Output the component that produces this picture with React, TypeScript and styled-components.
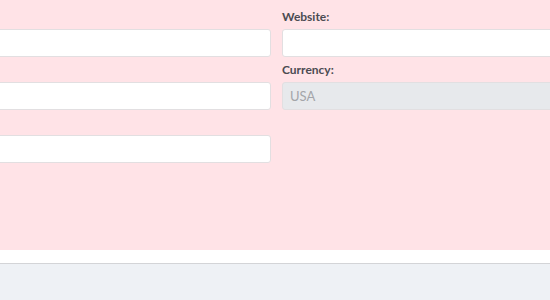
import styled, { createGlobalStyle } from 'styled-components';

const GlobalStyle = createGlobalStyle`
  html, body {
    margin: 0;
    padding: 0;
    overflow: hidden;
    background: #eef1f5;
    font-family: Lato, "Open Sans", sans-serif;
  }
`;

const Page = styled.div`
  width: 550px;
  height: 300px;
  overflow: hidden;
  display: flex;
  flex-direction: column;
`;

const FormArea = styled.section`
  height: 250px;
  box-sizing: border-box;
  background: #ffe3e7;
  padding-top: 10px;
`;

const Columns = styled.div`
  display: grid;
  grid-template-columns: 400px 400px;
  column-gap: 11px;
  margin-left: -129px;
`;

const Column = styled.div`
  display: flex;
  flex-direction: column;
`;

// fields without a visible label keep the same vertical rhythm
const Field = styled.div<{ $bare?: boolean }>`
  display: flex;
  flex-direction: column;
  margin-bottom: 6px;
  padding-top: ${(p) => (p.$bare ? '19px' : '0')};
`;

const Label = styled.label`
  font-size: 12px;
  line-height: 14px;
  font-weight: 700;
  color: #4b4b52;
  margin-bottom: 5px;
`;

const Input = styled.input`
  box-sizing: border-box;
  height: 28px;
  width: 100%;
  border: 1px solid #e2dfe1;
  border-radius: 3px;
  background: ${(p) => (p.disabled ? '#e7e9ec' : '#ffffff')};
  color: #a3a5a9;
  font-family: inherit;
  font-size: 13px;
  padding: 0 7px;
  outline: none;
`;

const Spacer = styled.div`
  height: 13px;
  background: #ffffff;
`;

const Footer = styled.footer`
  flex: 1;
  background: #eef1f5;
  border-top: 1px solid #d3d4d7;
`;

const App = (): JSX.Element => {
  return (
    <Page>
      <GlobalStyle />
      <FormArea>
        <Columns>
          <Column>
            <Field $bare>
              <Input aria-label="Name" />
            </Field>
            <Field $bare>
              <Input aria-label="Email" />
            </Field>
            <Field $bare>
              <Input aria-label="Phone" />
            </Field>
          </Column>
          <Column>
            <Field>
              <Label>Website:</Label>
              <Input />
            </Field>
            <Field>
              <Label>Currency:</Label>
              <Input disabled value="USA" readOnly />
            </Field>
          </Column>
        </Columns>
      </FormArea>
      <Spacer />
      <Footer />
    </Page>
  );
};

export default App;
